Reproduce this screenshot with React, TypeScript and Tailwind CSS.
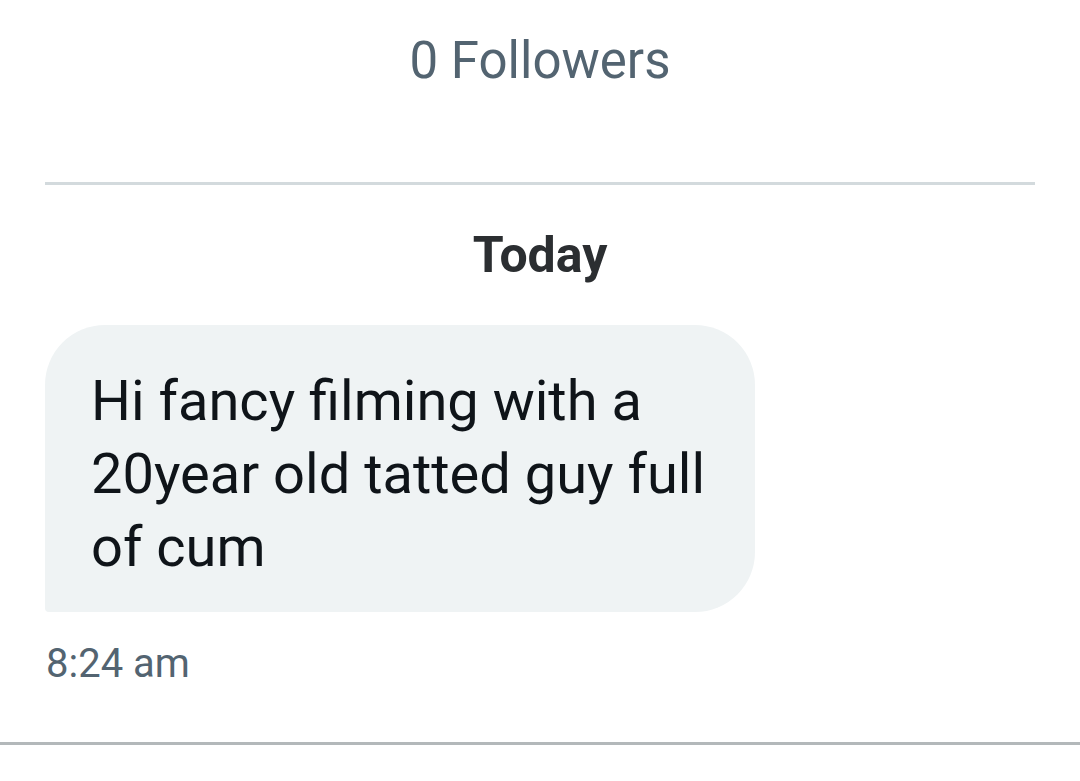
export default function App() {
  return (
    <div className="w-[1080px] h-[781px] bg-white font-['Roboto',sans-serif] overflow-hidden">
      <div className="pt-[36px] text-center text-[51px] leading-[50px] text-[#536471]">0 Followers</div>

      <div className="mt-[96px] mx-[45px] h-[3px] bg-[#d3dadd]" />

      <div className="mt-[44px] text-center text-[50px] leading-[52px] font-bold text-[#2b2e31]">Today</div>

      <div className="mt-[44px] ml-[45px] w-[710px] h-[287px] rounded-[60px] rounded-bl-[4px] bg-[#eff3f4] pl-[46px] pr-[16px] pt-[40px]">
        <p className="text-[56px] leading-[73px] text-[#0f1419] whitespace-nowrap">
          Hi fancy filming with a
          <br />
          20year old tatted guy full
          <br />
          of cum
        </p>
      </div>

      <div className="mt-[30px] ml-[46px] text-[40px] leading-[44px] text-[#536471]">8:24 am</div>

      <div className="mt-[56px] h-[3px] bg-[#b3b8ba]" />
    </div>
  );
}
